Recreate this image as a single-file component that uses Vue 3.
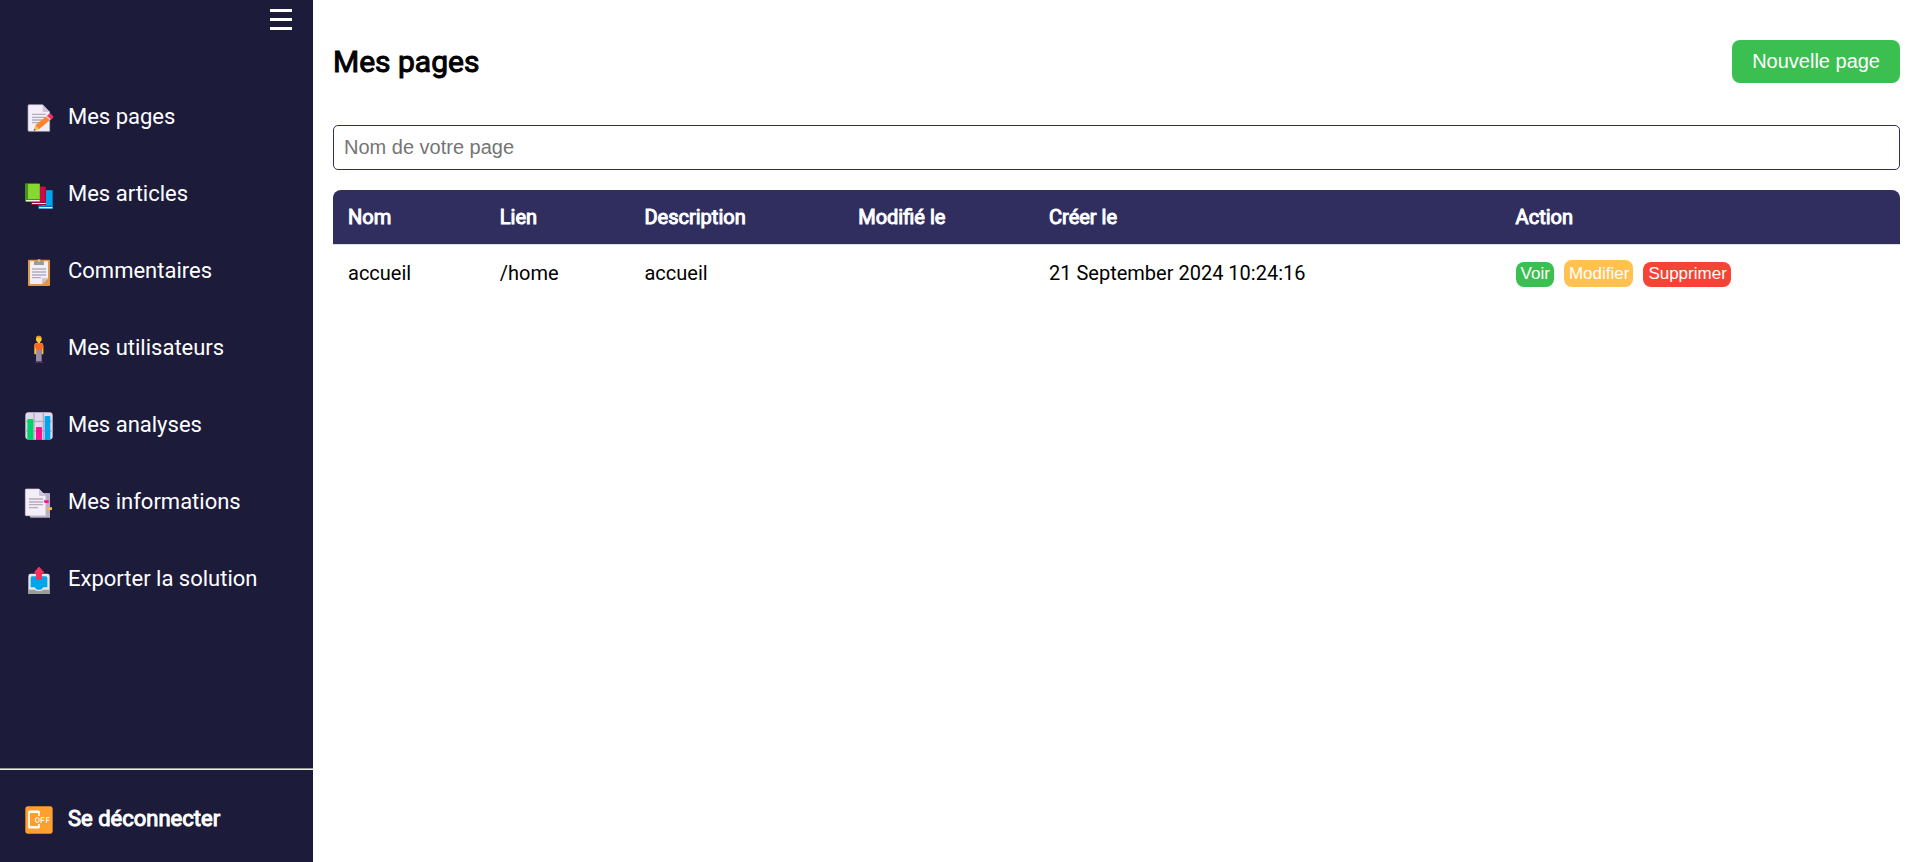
<script setup>
import { ref } from 'vue'

const links = [
  { id: 'pages', label: 'Mes pages' },
  { id: 'articles', label: 'Mes articles' },
  { id: 'comments', label: 'Commentaires' },
  { id: 'users', label: 'Mes utilisateurs' },
  { id: 'stats', label: 'Mes analyses' },
  { id: 'infos', label: 'Mes informations' },
  { id: 'export', label: 'Exporter la solution' },
]
const columns = ['Nom', 'Lien', 'Description', 'Modifié le', 'Créer le', 'Action']
const pages = [
  { name: 'accueil', link: '/home', description: 'accueil', updated: '', created: '21 September 2024 10:24:16' },
]
const search = ref('')
</script>

<template>
  <div class="layout">
    <aside class="sidebar">
      <button class="burger" type="button" aria-label="Menu">
        <svg width="22" height="21" viewBox="0 0 22 21"><path d="M0 0h22v3H0zM0 9h22v3H0zM0 18h22v3H0z" fill="#fff" /></svg>
      </button>
      <nav class="nav">
        <a v-for="l in links" :key="l.id" class="item" href="#">
          <svg class="icon" viewBox="0 0 84 84" aria-hidden="true">
            <g v-if="l.id === 'pages'">
              <path d="M12 2H53L74 24V82H12a3 3 0 0 1-3-3V5a3 3 0 0 1 3-3z" fill="#f3eef8" stroke="#aaa3bb" stroke-width="2" />
              <path d="M53 2L74 24H56a3 3 0 0 1-3-3z" fill="#cdc4d6" />
              <path d="M21 31H62M21 40H62M21 48H54M21 56H42" stroke="#b4acbc" stroke-width="4" />
              <path d="M26 80L31 64L42 76z" fill="#f9c23c" />
              <path d="M26 80L28 74L32 78z" fill="#433b6b" />
              <path d="M31 64L65 36L76 47L42 76z" fill="#ff822d" />
              <path d="M65 36L72 30Q76 28 79 31L84 37Q86 40 83 43L76 48z" fill="#f92f60" />
              <path d="M63 38L66 35L77 46L74 49z" fill="#d3d3d3" />
            </g>
            <g v-else-if="l.id === 'articles'">
              <path d="M43 28H84V84H43a4 4 0 0 1-4-4z" fill="#0074ba" />
              <path d="M51 28H81V74H51z" fill="#00a6ed" />
              <path d="M42 78H82V82H42z" fill="#f3eef8" />
              <path d="M22 16H60a3 3 0 0 1 3 3V72H22a4 4 0 0 1-4-4z" fill="#990838" />
              <path d="M28 18H61V62H28z" fill="#ca0b4a" />
              <path d="M21 66H62V69H21z" fill="#f3eef8" />
              <path d="M4 7H42a3 3 0 0 1 3 3V63H4a4 4 0 0 1-4-4V10a3 3 0 0 1 4-3z" fill="#44911b" />
              <path d="M9 9H44V54H9z" fill="#86d72f" />
              <path d="M3 57H44V61H3z" fill="#f3eef8" />
            </g>
            <g v-else-if="l.id === 'comments'">
              <rect x="9" y="5" width="66" height="79" rx="3" fill="#e19747" />
              <path d="M15 10H69V60L52 78H15z" fill="#f3eef8" />
              <path d="M51 60H70L51 79z" fill="#cdc4d6" />
              <path d="M21 33H63M21 42H63M21 51H63M21 59H48" stroke="#b4acbc" stroke-width="4" />
              <path d="M35 9Q36 3 42 3T49 9H54a3 3 0 0 1 3 3V21H27V12a3 3 0 0 1 3-3z" fill="#9b9b9b" />
              <circle cx="42" cy="8" r="3" fill="#d3d3d3" />
            </g>
            <g v-else-if="l.id === 'users'">
              <path d="M34 24H49Q55 25 55 32V58H50V40H33V58H28V32Q28 25 34 24z" fill="#ffc83d" />
              <path d="M38 18H45V26H38z" fill="#ffc83d" />
              <path d="M33 11Q33 2 41 2T50 11V15Q49 22 41 22Q34 22 33 15z" fill="#ffc83d" />
              <path d="M33 11Q33 2 41 2T50 11L47 9Q41 6 36 9z" fill="#e89a10" />
              <path d="M34 25H49Q55 26 55 32V40H28V32Q28 26 34 25z" fill="#ff6723" />
              <path d="M33 38H50V46H33z" fill="#ff6723" />
              <path d="M33 45H50V80H33z" fill="#998ea4" />
              <path d="M30 84Q30 79 36 78H40V84zM43 78H48Q54 79 54 84H43z" fill="#533566" />
            </g>
            <g v-else-if="l.id === 'stats'">
              <rect x="1" y="1" width="82" height="82" rx="10" fill="#e1d8ec" />
              <path d="M27 1V83M55 1V83M1 28H83M1 57H83" stroke="#b4acbc" stroke-width="4" />
              <path d="M7 24a3 3 0 0 1 3-3H22a3 3 0 0 1 3 3V84H7z" fill="#00d26a" />
              <path d="M33 48a3 3 0 0 1 3-3H48a3 3 0 0 1 3 3V84H33z" fill="#ff0e96" />
              <path d="M59 15a3 3 0 0 1 3-3H73a3 3 0 0 1 3 3V84H59z" fill="#00a6ed" />
            </g>
            <g v-else-if="l.id === 'infos'">
              <path d="M15 12H72a3 3 0 0 1 3 3V86H18a3 3 0 0 1-3-3z" fill="#b9afc4" />
              <path d="M4 0H42L62 21V80H4a3 3 0 0 1-3-3V3a3 3 0 0 1 3-3z" fill="#f3eef8" stroke="#d8d0e2" stroke-width="2" />
              <path d="M42 0L62 21H45a3 3 0 0 1-3-3z" fill="#cdc4d6" />
              <path d="M12 30H54M12 39H54M12 47H54M12 56H39" stroke="#b4acbc" stroke-width="4" />
              <path d="M57 34H71V42H60L57 38z" fill="#ff0e96" />
              <path d="M66 55H81V63H69L66 59z" fill="#f9c23c" />
            </g>
            <g v-else>
              <path d="M17 23H67a7 7 0 0 1 7 7V84H10V30a7 7 0 0 1 7-7z" fill="#e6e6e6" />
              <path d="M9 71H30L35 75H49L54 71H75V79a5 5 0 0 1-5 5H14a5 5 0 0 1-5-5z" fill="#9b9b9b" />
              <path d="M22 31H62a5 5 0 0 1 5 5V64H55L48 71H36L29 64H17V36a5 5 0 0 1 5-5z" fill="#00a6ed" />
              <path d="M40 4Q42 1 44 4L57 18Q58 21 55 21H51V41H33V21H29Q26 21 28 18z" fill="#f92f60" />
            </g>
          </svg>
          <span>{{ l.label }}</span>
        </a>
      </nav>
      <div class="logout">
        <a class="item strong" href="#">
          <svg class="icon" viewBox="0 0 84 84" aria-hidden="true">
            <rect x="1" y="1" width="82" height="82" rx="8" fill="#ff9f2e" />
            <path d="M42 30V18a2 2 0 0 0-2-2H14a2 2 0 0 0-2 2V63a2 2 0 0 0 2 2H40a2 2 0 0 0 2-2V54" fill="none" stroke="#fff" stroke-width="5" />
            <path d="M12 18H43M12 63H43" stroke="#fff" stroke-width="6" />
            <rect x="32" y="35" width="10" height="14" rx="4" fill="none" stroke="#fff" stroke-width="3" />
            <path d="M48 51V35H58M48 43H57M64 51V35H74M64 43H73" fill="none" stroke="#fff" stroke-width="3" />
          </svg>
          <span>Se déconnecter</span>
        </a>
      </div>
    </aside>

    <main class="main">
      <header class="head">
        <h1 class="title">Mes pages</h1>
        <button class="new" type="button">Nouvelle page</button>
      </header>
      <input v-model="search" class="search" type="text" placeholder="Nom de votre page" aria-label="Nom de votre page" />
      <table class="table">
        <thead>
          <tr><th v-for="c in columns" :key="c" scope="col">{{ c }}</th></tr>
        </thead>
        <tbody>
          <tr v-for="p in pages" :key="p.link">
            <td>{{ p.name }}</td>
            <td>{{ p.link }}</td>
            <td>{{ p.description }}</td>
            <td>{{ p.updated }}</td>
            <td>{{ p.created }}</td>
            <td>
              <div class="actions">
                <button class="tag green" type="button">Voir</button>
                <button class="tag yellow" type="button">Modifier</button>
                <button class="tag red" type="button">Supprimer</button>
              </div>
            </td>
          </tr>
        </tbody>
      </table>
    </main>
  </div>
</template>

<style>
body {
  margin: 0;
  background: #fff;
}
</style>

<style scoped>
.layout {
  display: flex;
  min-height: 100vh;
  font-family: Roboto, "Liberation Sans", sans-serif;
  font-size: 20px;
  color: #000;
}
.layout * {
  box-sizing: border-box;
}
.sidebar {
  flex: none;
  width: 313px;
  display: flex;
  flex-direction: column;
  background: #1d1b3a;
}
.burger {
  align-self: flex-end;
  display: flex;
  margin: 9px 21px 0 0;
  padding: 0;
  border: 0;
  background: none;
}
.nav {
  margin-top: 49px;
}
.item {
  display: flex;
  align-items: center;
  gap: 15px;
  height: 77px;
  padding-left: 25px;
  color: #fff;
  font-size: 22px;
  line-height: 30px;
  text-decoration: none;
}
.item span {
  padding-bottom: 2px;
}
.strong {
  -webkit-text-stroke: 1px #fff;
}
.icon {
  flex: none;
  width: 28px;
  height: 28px;
  overflow: visible;
}
.logout {
  margin-top: auto;
  padding: 12px 0 4px;
  border-top: 1px solid #9a9a9a;
  box-shadow: inset 0 1px #eee;
}
.main {
  flex: 1;
  min-width: 0;
  padding: 40px 18px 20px 20px;
}
.head {
  display: flex;
  align-items: center;
  justify-content: space-between;
  margin-bottom: 42px;
}
.title {
  margin: 0;
  font-size: 30px;
  line-height: 36px;
  font-weight: 400;
  -webkit-text-stroke: 1px #000;
}
.new {
  height: 43px;
  padding: 0 20px;
  border: 0;
  border-radius: 8px;
  background: #3abf50;
  color: #fff;
  font-family: "Liberation Sans", Arial, sans-serif;
  font-size: 20px;
}
.search {
  display: block;
  width: 100%;
  height: 45px;
  margin-bottom: 20px;
  padding: 0 10px;
  border: 1px solid #2f2e5f;
  border-radius: 5px;
  font-family: "Liberation Sans", Arial, sans-serif;
  font-size: 20px;
}
.search::placeholder {
  color: #757575;
}
.table {
  width: 100%;
  border-spacing: 0;
  border-radius: 8px;
  overflow: hidden;
}
th {
  height: 55px;
  padding: 0 15px;
  background: #2f2e5f;
  border-bottom: 1px solid #ddd;
  color: #fff;
  font-weight: 400;
  text-align: left;
  -webkit-text-stroke: 1px #fff;
}
td {
  height: 57px;
  padding: 0 15px 2px;
}
.actions {
  display: flex;
  align-items: flex-end;
  gap: 10px;
  padding-top: 2px;
}
.tag {
  height: 25px;
  padding: 0 4px 2px 5px;
  border: 0;
  border-radius: 8px;
  color: #fff;
  font-family: "Liberation Sans", Arial, sans-serif;
  font-size: 17px;
  line-height: 23px;
}
.green {
  background: #3abf50;
}
.yellow {
  height: 27px;
  padding-bottom: 0;
  background: #ffc14f;
}
.red {
  background: #f74236;
}
</style>
